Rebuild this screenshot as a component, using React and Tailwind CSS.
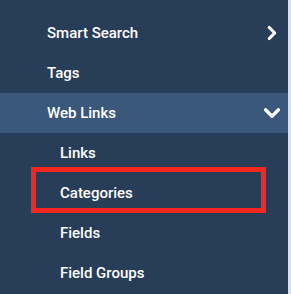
import { ChevronRight, ChevronDown } from 'lucide-react';

const items = [
  { label: 'Smart Search', chevron: 'right' },
  { label: 'Tags' },
  { label: 'Web Links', chevron: 'down', active: true },
  { label: 'Links', sub: true },
  { label: 'Categories', sub: true, boxed: true },
  { label: 'Fields', sub: true },
  { label: 'Field Groups', sub: true },
];

export default function App() {
  return (
    <div className="flex h-[294px] w-[291px] overflow-hidden bg-[#d9e1ec] font-['Roboto',sans-serif]">
      <nav className="w-[288px] bg-[#283d58] pt-[13px]">
        {items.map((item) => (
          <div
            key={item.label}
            className={`relative flex h-10 items-center pr-[2px] text-[15px] font-medium text-white ${
              item.active ? 'bg-[#3a577c]' : ''
            } ${item.sub ? 'pl-[60px]' : 'pl-[47px]'}`}
          >
            <span className="flex-1">{item.label}</span>
            <span className="flex w-7 items-center justify-center">
              {item.chevron === 'right' && <ChevronRight size={22} strokeWidth={3.4} />}
              {item.chevron === 'down' && <ChevronDown size={26} strokeWidth={3} />}
            </span>
            {/* highlight box around the menu entry */}
            {item.boxed && (
              <div className="pointer-events-none absolute left-[31px] top-[-6px] h-[46px] w-[235px] border-[5px] border-[#f5281f]" />
            )}
          </div>
        ))}
      </nav>
    </div>
  );
}
